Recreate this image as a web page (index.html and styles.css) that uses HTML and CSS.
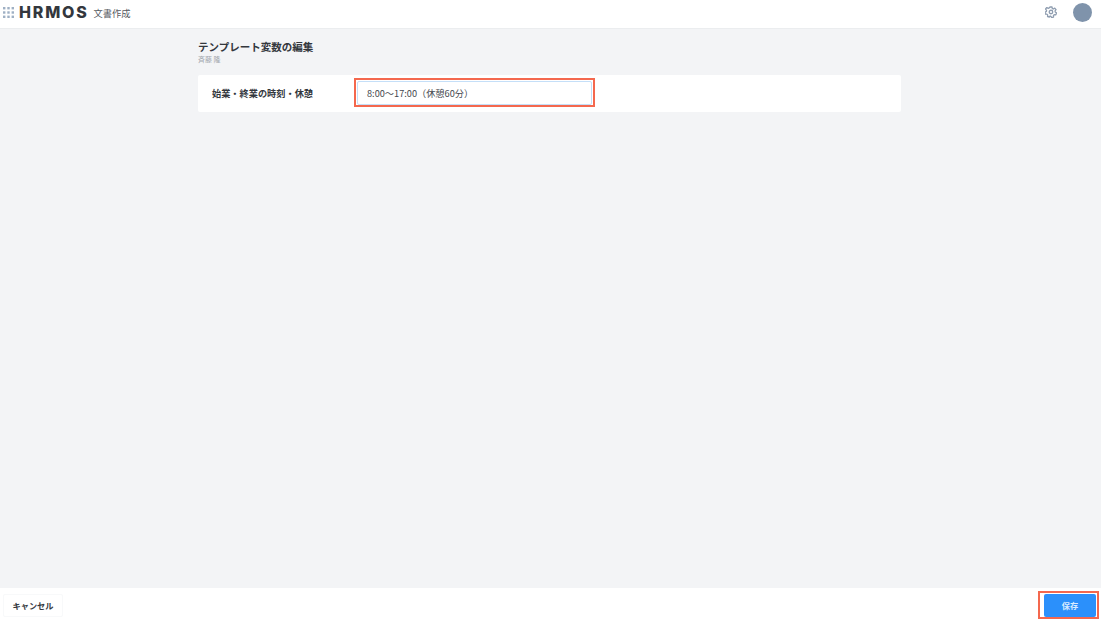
FILE: index.html
```html
<!DOCTYPE html>
<html lang="ja">
<head>
<meta charset="utf-8">
<title>テンプレート変数の編集</title>
<link rel="stylesheet" href="styles.css">
</head>
<body>
<div class="app">
  <header class="topbar">
    <div class="brand">
      <svg class="grid-icon" width="11" height="11" viewBox="0 0 11 11" aria-hidden="true">
        <g fill="#9fb0c4">
          <rect x="0" y="0" width="2.4" height="2.4"/><rect x="4.3" y="0" width="2.4" height="2.4"/><rect x="8.6" y="0" width="2.4" height="2.4"/>
          <rect x="0" y="4.3" width="2.4" height="2.4"/><rect x="4.3" y="4.3" width="2.4" height="2.4"/><rect x="8.6" y="4.3" width="2.4" height="2.4"/>
          <rect x="0" y="8.6" width="2.4" height="2.4"/><rect x="4.3" y="8.6" width="2.4" height="2.4"/><rect x="8.6" y="8.6" width="2.4" height="2.4"/>
        </g>
      </svg>
      <span class="logo">HRMOS</span>
      <span class="product">文書作成</span>
    </div>
    <div class="tools">
      <svg class="gear" width="12" height="12" viewBox="0 0 24 24" fill="none" stroke="#8f9db0" stroke-width="2.6" aria-hidden="true">
        <circle cx="12" cy="12" r="3.5"/>
        <path d="M10 2h4l.7 3.100 2 .9 2.800-1.700 2.600 3-2 2.500.3 2.200 2.600 1.800-1.300 3.800-3.200-.2-1.600 1.600.2 3.200-3.800 1-1.600-2.700h-2.200L8.900 22l-3.800-1 .2-3.200-1.600-1.600-3.200.2L.2 12.600l2.600-1.800.3-2.200-2-2.500 2.600-3 2.800 1.700 2-.9z" stroke-linejoin="round"/>
      </svg>
      <div class="avatar"></div>
    </div>
  </header>

  <main class="content">
    <div class="panel">
      <h1 class="title">テンプレート変数の編集</h1>
      <p class="subtitle">斉藤 隆</p>
      <div class="card">
        <label class="field-label" for="v1">始業・終業の時刻・休憩</label>
        <div class="mark mark-input">
          <input id="v1" class="field-input" type="text" value="8:00〜17:00（休憩60分）">
        </div>
      </div>
    </div>
  </main>

  <footer class="footer">
    <button class="btn btn-cancel" type="button">キャンセル</button>
    <div class="mark mark-save">
      <button class="btn btn-save" type="button">保存</button>
    </div>
  </footer>
</div>
</body>
</html>
```

FILE: styles.css
```css
* { box-sizing: border-box; }
html, body { margin: 0; height: 100%; }
body {
  font-family: "Noto Sans CJK JP", "Noto Sans", "Liberation Sans", sans-serif;
  background: #f3f4f6;
  color: #2f3338;
}
.app { height: 619px; display: flex; flex-direction: column; overflow: hidden; }

.topbar {
  height: 29px;
  flex: none;
  background: #fff;
  border-bottom: 1px solid #ebedef;
  display: flex;
  align-items: center;
  justify-content: space-between;
  padding: 0 9px 4px 3px;
}
.brand { display: flex; align-items: center; }
.grid-icon { display: block; }
.logo {
  margin-left: 5px;
  font-family: Inter, "Liberation Sans", sans-serif;
  font-weight: 800;
  font-size: 16px;
  line-height: 18px;
  letter-spacing: 1.8px;
  color: #33373d;
}
.product { margin-left: 5px; padding-top: 1px; font-size: 9.25px; line-height: 12px; color: #55595f; }
.tools { display: flex; align-items: center; gap: 16px; }
.gear { display: block; }
.avatar { width: 19px; height: 19px; border-radius: 50%; background: #7f93ab; }

.content { flex: 1; padding: 11px 200px 0 198px; }
.panel { display: flex; flex-direction: column; }
.title { margin: 0; font-size: 10.5px; line-height: 13px; font-weight: 700; color: #33373d; }
.subtitle { margin: 1px 0 0; font-size: 7px; line-height: 10px; color: #a3a8ae; }
.card {
  margin-top: 11px;
  height: 37px;
  background: #fff;
  border-radius: 2px;
  display: flex;
  align-items: flex-start;
  padding: 3px 0 0 14px;
}
.field-label { width: 142px; flex: none; align-self: center; margin-top: -5px; font-size: 9.2px; font-weight: 700; color: #33373d; }

.mark { border: 2px solid #f4684e; }
.mark-input { padding: 1px 1px 0 1px; width: 241px; }
.field-input {
  display: block;
  width: 100%;
  height: 24px;
  padding: 0 9px;
  font: inherit;
  font-size: 9.2px;
  color: #44484e;
  background: #fff;
  border: 1px solid #c5dff8;
  border-radius: 2px;
  outline: none;
}

.footer {
  height: 31px;
  flex: none;
  background: #fff;
  display: flex;
  justify-content: space-between;
  align-items: flex-end;
  padding: 0 2px 0 3px;
}
.btn {
  display: block;
  font-family: inherit;
  font-size: 8.2px;
  font-weight: 700;
  height: 23px;
  border-radius: 2px;
  padding: 0 0 2px;
}
.btn-cancel {
  width: 60px;
  margin-bottom: 2px;
  background: #fff;
  border: 1px solid #f8f9fa;
  color: #33373d;
}
.mark-save { padding: 1px 1px 0 4px; }
.btn-save {
  width: 52px;
  background: #2b90fb;
  border: none;
  color: #d9ecff;
}
```
